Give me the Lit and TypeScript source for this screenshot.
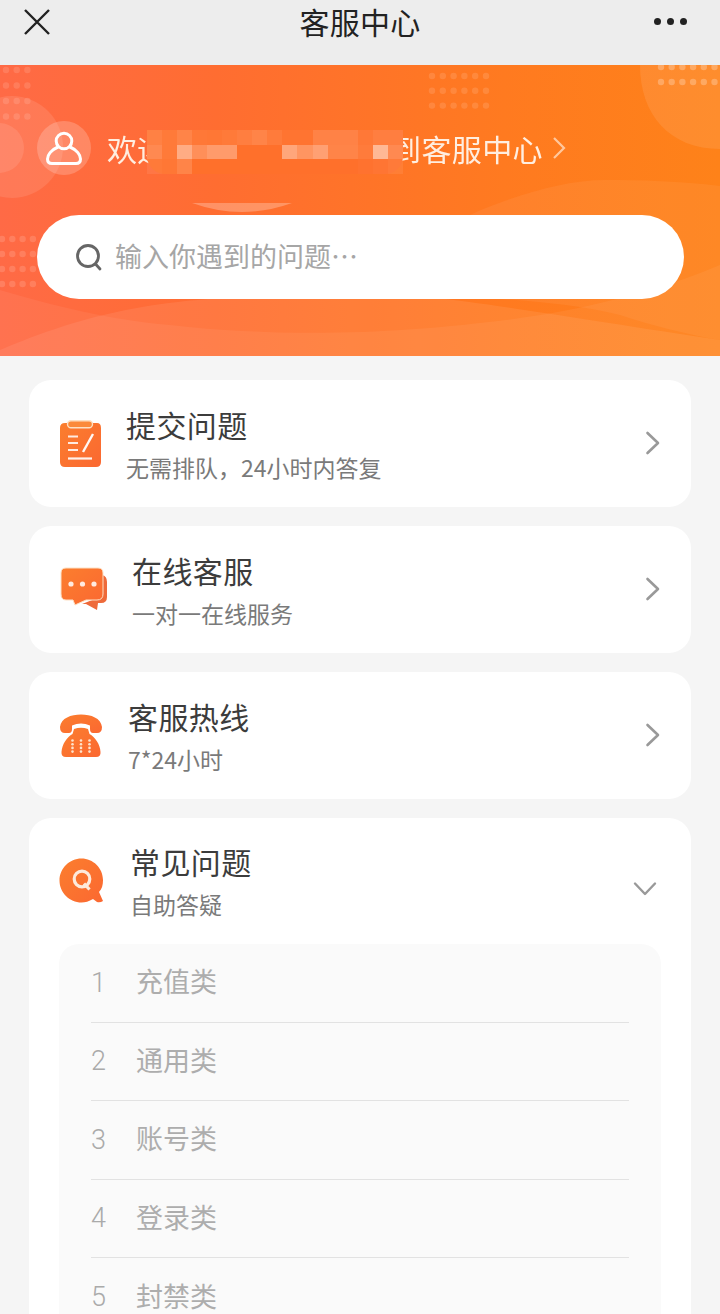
import { LitElement, html, css, svg } from "lit";
import { customElement } from "lit/decorators.js";

const chevron = html`<svg class="chev" viewBox="0 0 16 26" width="16" height="26"><path d="M2.5 3 L13 13 L2.5 23" fill="none" stroke="#999" stroke-width="2.6" stroke-linecap="round" stroke-linejoin="round"/></svg>`;

const defs = svg`<defs><linearGradient id="ig" x1="0" y1="0" x2="1" y2="1"><stop offset="0" stop-color="#fb7e2e"/><stop offset="1" stop-color="#fb6831"/></linearGradient></defs>`;

const iconSubmit = html`<svg width="44" height="48" viewBox="0 0 44 48">${defs}
  <path d="M6 3 H38 Q42 3 42 8 V42 Q42 47 37 47 H6 Q1 47 1 42 V8 Q1 3 6 3Z" fill="url(#ig)"/>
  <rect x="8.500" y="0.800" width="25" height="7" rx="3.500" fill="#fb8a3a" stroke="#fde0c4" stroke-width="1.400"/>
  <path d="M9 16.500H19M9 23H19M9 30H19" stroke="#fff" stroke-width="2" stroke-opacity=".85" fill="none"/>
  <path d="M24 32 L34 14" stroke="#fff" stroke-width="2.400" fill="none" opacity=".95"/>
  <path d="M9 38.500H33" stroke="#fff" stroke-width="2.200" opacity=".9" fill="none"/>
</svg>`;

const iconChat = html`<svg width="48" height="46" viewBox="0 0 48 46">${defs}
  <path d="M42 8 Q47 9 47 15 V30 Q47 36 41 36 H38 L37 43 L26 37 H22 L40 30Z" fill="#ee6a3a"/>
  <path d="M6 1 H38 Q43 1 43 6 V27 Q43 33 37 33 H26 L15 38 L13 33 H6 Q1 33 1 27 V6 Q1 1 6 1Z" fill="url(#ig)" stroke="#fde0c4" stroke-width="1"/>
  <circle cx="11" cy="17" r="2.600" fill="#fff" opacity=".85"/><circle cx="22.500" cy="17" r="2.600" fill="#fff" opacity=".85"/><circle cx="34" cy="17" r="2.600" fill="#fff" opacity=".85"/>
</svg>`;

const iconPhone = html`<svg width="44" height="44" viewBox="0 0 44 44">${defs}
  <path d="M1 13 C2 4 12 0.500 22 0.500 C32 0.500 42 4 43 13 Q43 19 38 19 H34 Q31 19 31 15 L31 11.500 Q22 7.500 13 11.500 L13 15 Q13 19 10 19 H6 Q1 19 1 13Z" fill="url(#ig)"/>
  <path d="M15 15 Q22 12.500 29 15 L30.500 20 C36 23 41 30 41.500 38 Q42 43 37 43 H7 Q2 43 2.500 38 C3 30 8 23 13.500 20Z" fill="url(#ig)"/>
  <g fill="#fde3cc">
    ${[0, 1, 2].map((c) => [0, 1, 2, 3].map((r) => svg`<circle cx="${13.500 + c * 8.500}" cy="${26.500 + r * 3.700}" r="1.300"/>`))}
  </g>
</svg>`;

const iconQ = html`<svg width="46" height="46" viewBox="0 0 46 46">${defs}
  <path d="M22.500 0.500 C34 0.500 44 10 44 22 C44 27 43 31 40 34 L44 43 Q41 45 38 44 L34 41 Q28 44.500 22.500 44.500 C10.500 44.500 0.500 34.500 0.500 22.500 C0.500 10.500 10.500 0.500 22.500 0.500Z" fill="url(#ig)"/>
  <circle cx="23" cy="21" r="7.800" fill="none" stroke="#fdeadb" stroke-width="3.200"/>
  <path d="M25 25.500 L30.500 31.500" stroke="#fdeadb" stroke-width="3.200" fill="none"/>
</svg>`;

const dots = (x: number, y: number, cols: number, rows: number, dx: number, dy: number, o = 0.13) =>
  svg`<g fill="#fff" opacity="${o}">${Array.from({ length: rows }).map((_, r) =>
    Array.from({ length: cols }).map((_, c) => svg`<circle cx="${x + c * dx}" cy="${y + r * dy}" r="3.200"/>`)
  )}</g>`;

// Mosaic covering the masked user name: opacity per block, three rows of 17.
const mosaic: number[][] = [
  [.12, .07, .14, .06, .05, .07, .1, .14, .08, .03, .03, .13, .13, .13, .06, .1, .1],
  [.18, .07, .42, .22, .3, .3, 0, 0, 0, .38, .26, .34, .14, .14, .08, .5, .18],
  [.07, .05, .14, 0, 0, 0, 0, 0, 0, 0, 0, 0, 0, 0, .02, .04, .07],
];

@customElement("app-root")
export class AppRoot extends LitElement {
  static styles = css`
    :host { display: block; width: 720px; height: 1314px; overflow: hidden; background: #f5f5f5; font-family: "Noto Sans CJK SC", "Noto Sans", sans-serif; }
    .nav { height: 65px; background: #ededed; display: grid; grid-template-columns: 80px 1fr 80px; align-items: start; box-sizing: border-box; }
    .nav .x { margin: 8px 0 0 23px; display: block; }
    .nav .t { text-align: center; font-size: 30px; line-height: 40px; padding-top: 1px; color: #222; font-weight: 400; letter-spacing: .2px; }
    .nav .more { justify-self: end; margin: 18px 33px 0 0; display: flex; gap: 6px; }
    .nav .more i { width: 7px; height: 7px; border-radius: 50%; background: #222; display: block; }

    .banner { position: relative; height: 291px; box-sizing: border-box; padding: 56px 37px 0; overflow: hidden;
      background: linear-gradient(90deg, #ff6a46 0%, #ff6d31 30%, #ff7a20 70%, #fe8219 100%); }
    .bg { position: absolute; inset: 0; }
    .dotset { filter: blur(.7px); }
    .welcome { position: relative; display: flex; align-items: center; height: 54px; }
    .avatar { width: 54px; height: 54px; border-radius: 50%; background: rgba(255,255,255,.2); display: flex; align-items: center; justify-content: center; flex: none; }
    .wtext { margin-left: 16px; font-size: 30px; line-height: 54px; color: #ffeee0; white-space: nowrap; display: flex; }
    .wgap { width: 224px; flex: none; }
    .wend { letter-spacing: .4px; }
    .maskbg { position: absolute; left: 147px; top: 65px; width: 256px; height: 44px; background: #ff702b; border-radius: 0 0 18px 18px; }
    .mask { position: absolute; left: 147px; top: 65px; display: grid; grid-template-columns: repeat(17, 15.050px); grid-template-rows: repeat(3, 14.700px); filter: blur(.5px); }
    .mask i { display: block; background: #fff; }
    .wchev { margin-left: 9px; }
    .search { position: relative; margin-top: 40px; height: 84px; width: 647px; border-radius: 42px; background: #fff; display: flex; align-items: center; padding-left: 38px; box-sizing: border-box; }
    .search span { margin: 0 0 3px 12px; font-size: 27px; color: #a6a6a6; white-space: nowrap; }

    .list { padding: 24px 29px 0; display: flex; flex-direction: column; gap: 19px; }
    .card { background: #fff; border-radius: 22px; height: 127px; box-sizing: border-box; display: flex; align-items: center; padding: 0 29px; position: relative; }
    .ic { flex: none; display: flex; }
    .tx { flex: 1; display: flex; flex-direction: column; padding-bottom: 2px; }
    .tx b { font-weight: 400; font-size: 30px; line-height: 44px; color: #3c3c3c; letter-spacing: .4px; }
    .tx small { font-size: 23px; line-height: 34px; color: #7a7a7a; margin-top: 4px; }
    .chev { flex: none; margin: 0 1px 2px 0; }

    .faq { background: #fff; border-radius: 22px 22px 0 0; padding: 0 30px; }
    .faq .head { height: 126px; display: flex; align-items: center; }
    .qchev { margin: 15px 4px 0 0; flex: none; }
    .rows { background: #fafafa; border-radius: 20px; padding: 0 32px; }
    .row { height: 78.500px; display: flex; align-items: center; box-sizing: border-box; border-bottom: 1px solid #e2e2e2; color: #adadad; font-size: 27px; }
    .row:last-child { border-bottom: none; }
    .row span { margin-bottom: 4px; }
    .row em { font-style: normal; width: 45px; font-family: Roboto, sans-serif; font-weight: 300; font-size: 27px; color: #aaa; }
  `;

  private card(title: string, sub: string, icon: unknown, gap: number, left: number) {
    return html`<div class="card">
      <div class="ic" style="margin-left:${left}px;margin-right:${gap}px">${icon}</div>
      <div class="tx"><b>${title}</b><small>${sub}</small></div>
      ${chevron}
    </div>`;
  }

  render() {
    return html`
      <div class="nav">
        <svg class="x" width="28" height="28" viewBox="0 0 28 28"><path d="M2 2 L26 26 M26 2 L2 26" stroke="#222" stroke-width="2.400"/></svg>
        <div class="t">客服中心</div>
        <div class="more"><i></i><i></i><i></i></div>
      </div>
      <div class="banner">
        <svg class="bg" width="720" height="291" viewBox="0 0 720 291">
          <circle cx="12" cy="82" r="51" fill="#fff" opacity=".1"/>
          <circle cx="-1" cy="83" r="25" fill="#fff" opacity=".1"/>
          <path d="M640 0 C640 50 670 84 720 84 V0Z" fill="#fff" opacity=".09"/>
          <path d="M192 138 Q242 156 292 138 Z" fill="#fff" opacity=".26"/>
          <g class="dotset">
            ${dots(6, 5, 3, 4, 10.700, 15.500, .12)}
            ${dots(432, 11, 6, 3, 10.800, 14.800, .12)}
            ${dots(661, 2, 6, 2, 10.700, 15, .25)}
            ${dots(2, 174, 4, 4, 10.300, 15, .14)}
          </g>
          <!-- hill at the right -->
          <path d="M470 150 C515 130 565 115 605 115 C640 115 680 116 720 121 V275 C690 270 650 260 620 250 C580 240 540 237 500 234 L470 230Z" fill="#fff" opacity=".055"/>
          <!-- band in the lower part -->
          <path d="M0 285 C60 260 130 235 250 232 H430 C500 240 600 257 720 275 V291 H0Z" fill="#fff" opacity=".08"/>
          <path d="M0 225 C50 240 110 255 170 260 C300 275 420 265 480 258 C560 250 650 230 720 200 V291 H0Z" fill="#fff" opacity=".055"/>
        </svg>
        <div class="welcome">
          <div class="avatar">
            <svg width="36" height="36" viewBox="0 0 36 36"><circle cx="18" cy="11" r="7.800" fill="none" stroke="#fff" stroke-width="3"/><path d="M12 17 C5 20 1.500 25 1.500 29 Q1.500 33.500 6 33.500 H30 Q34.500 33.500 34.500 29 C34.500 25 31 20 24 17" fill="none" stroke="#fff" stroke-width="3" stroke-linecap="round"/></svg>
          </div>
          <div class="wtext"><span>欢迎</span><span class="wgap"></span><span class="wend">到客服中心</span></div>
          <svg class="wchev" width="14" height="24" viewBox="0 0 14 24"><path d="M2 2 L12 12 L2 22" fill="none" stroke="#ffc79d" stroke-width="2.200"/></svg>
        </div>
        <div class="maskbg"></div>
        <div class="mask">
          ${mosaic.map((row, r) => row.map((o, c) => html`<i style="grid-column:${c + 1};grid-row:${r + 1};opacity:${o}"></i>`))}
        </div>
        <div class="search">
          <svg width="28" height="28" viewBox="0 0 28 28"><circle cx="13" cy="13" r="10.500" fill="none" stroke="#666" stroke-width="2.800"/><path d="M20.500 21 L25 26" stroke="#666" stroke-width="2.800" stroke-linecap="round"/></svg>
          <span>输入你遇到的问题…</span>
        </div>
      </div>
      <div class="list">
        ${this.card("提交问题", "无需排队，24小时内答复", iconSubmit, 23, 1)}
        ${this.card("在线客服", "一对一在线服务", iconChat, 24, 2)}
        ${this.card("客服热线", "7*24小时", iconPhone, 25, 1)}
        <div class="faq">
          <div class="head">
            <div class="ic" style="margin-right:25px">${iconQ}</div>
            <div class="tx"><b>常见问题</b><small>自助答疑</small></div>
            <svg class="qchev" width="24" height="16" viewBox="0 0 24 16"><path d="M2 2.500 L12 13 L22 2.500" fill="none" stroke="#999" stroke-width="2.400" stroke-linecap="round" stroke-linejoin="round"/></svg>
          </div>
          <div class="rows">
            ${["充值类", "通用类", "账号类", "登录类", "封禁类"].map(
              (t, i) => html`<div class="row"><em>${i + 1}</em><span>${t}</span></div>`
            )}
          </div>
        </div>
      </div>
    `;
  }
}
